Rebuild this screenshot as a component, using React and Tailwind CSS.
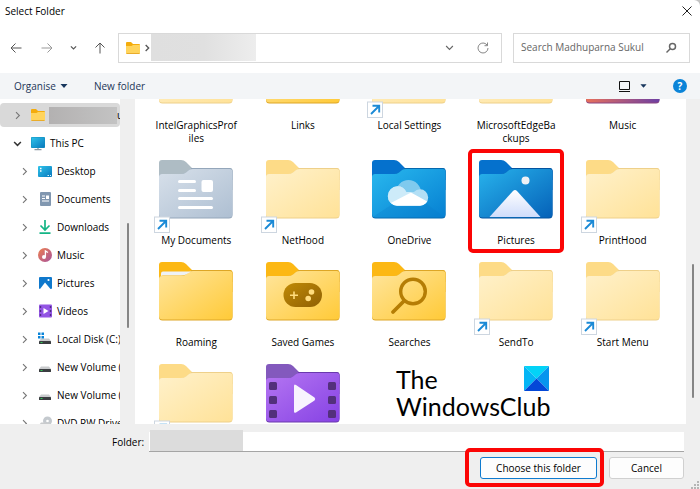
import React, { useState } from 'react';

// body + tab gradients for every folder colour
const PALETTES = {
  yellow: { tab: '#fcb814', from: '#ffe59c', to: '#ffca38', edge: '#dda626' },
  faded: { tab: '#fddb87', from: '#fff1cb', to: '#ffe298', edge: '#eed08a' },
  grey: { tab: '#aebcc4', from: '#d7e0ea', to: '#aebfd2', edge: '#94a6ba' },
  blue: { tab: '#0571cd', from: '#29b8ee', to: '#0680d2', edge: '#0568ae' },
  navy: { tab: '#0571cd', from: '#28b3ec', to: '#0561b8', edge: '#04539f' },
  purple: { tab: '#8359bd', from: '#b576f2', to: '#8642e4', edge: '#6a39ad' },
  music: { tab: '#e8705b', from: '#e8705b', to: '#6d3fa3', edge: '#8a4580' },
};

const FILES = [
  { name: 'IntelGraphicsProfiles', color: 'faded', lines: ['IntelGraphicsProf', 'iles'] },
  { name: 'Links', color: 'yellow' },
  { name: 'Local Settings', color: 'faded', shortcut: true },
  { name: 'MicrosoftEdgeBackups', color: 'faded', lines: ['MicrosoftEdgeBa', 'ckups'] },
  { name: 'Music', color: 'music' },
  { name: 'My Documents', color: 'grey', glyph: 'document', shortcut: true },
  { name: 'NetHood', color: 'faded', shortcut: true },
  { name: 'OneDrive', color: 'blue', glyph: 'cloud' },
  { name: 'Pictures', color: 'navy', glyph: 'picture', marked: true },
  { name: 'PrintHood', color: 'faded', shortcut: true },
  { name: 'Roaming', color: 'yellow', glyph: 'paper' },
  { name: 'Saved Games', color: 'yellow', glyph: 'game' },
  { name: 'Searches', color: 'yellow', glyph: 'search' },
  { name: 'SendTo', color: 'faded', shortcut: true },
  { name: 'Start Menu', color: 'faded', shortcut: true },
  { name: 'Templates', color: 'faded', shortcut: true },
  { name: 'Videos', color: 'purple', glyph: 'video' },
];

const PLACES = [
  { name: 'Desktop', icon: 'desktop' },
  { name: 'Documents', icon: 'documents' },
  { name: 'Downloads', icon: 'downloads' },
  { name: 'Music', icon: 'music' },
  { name: 'Pictures', icon: 'pictures' },
  { name: 'Videos', icon: 'videos' },
  { name: 'Local Disk (C:)', icon: 'system' },
  { name: 'New Volume (D:)', icon: 'drive' },
  { name: 'New Volume (E:)', icon: 'drive' },
  { name: 'DVD RW Drive (F:)', icon: 'dvd' },
];

function Glyph({ type }) {
  switch (type) {
    case 'document':
      return (
        <g fill="#fff">
          <rect x="24" y="20" width="18" height="3" rx="1.5" />
          <rect x="24" y="29" width="18" height="3" rx="1.5" />
          <rect x="24" y="37" width="35" height="3" rx="1.5" />
          <rect x="24" y="46" width="35" height="3" rx="1.5" />
          <rect x="47.5" y="20" width="11.5" height="12" rx="2" />
        </g>
      );
    case 'cloud':
      return (
        <g>
          <clipPath id="cloud">
            <circle cx="30.500" cy="36" r="9.700" />
            <circle cx="53" cy="37.500" r="8.200" />
            <rect x="30" y="32" width="23" height="13.700" />
          </clipPath>
          <path d="M5 57.500 L44 32 L78 57.500 Z" fill="#0679c8" opacity="0.25" />
          <circle cx="41.500" cy="32.500" r="12.500" fill="#7fcaee" />
          <g clipPath="url(#cloud)">
            <rect x="20" y="20" width="42" height="26" fill="#b3dff5" />
            <path d="M20 20 H36 L44 33 L20 46 Z" fill="#cdebf9" />
            <path d="M20 45 L44 32.500 L63 43 V46 H20 Z" fill="#fff" />
          </g>
        </g>
      );
    case 'picture':
      return (
        <g>
          <circle cx="51.500" cy="20.500" r="4" fill="#eef1f5" />
          <path d="M15.500 57 L39 31 Q41 29 43 31 L66.500 57 Z" fill="url(#peak)" />
        </g>
      );
    case 'paper':
      return <path d="M7 14 V11.500 Q7 9.500 9 9.500 H37 L32 12.500 Q30 13.500 27 13.500 H9 Q7 13.500 7 14 Z" fill="#eef2f7" />;
    case 'game':
      return (
        <g>
          <rect x="22.500" y="21" width="38.500" height="24" rx="12" fill="url(#pad)" />
          <path d="M33 29.500 V37 M29 33.200 H37" stroke="#ffdc7d" strokeWidth="1.600" fill="none" />
          <circle cx="50.500" cy="30" r="2.800" fill="#ffdc7d" />
          <circle cx="47.200" cy="36.500" r="2.800" fill="#ffdc7d" />
        </g>
      );
    case 'search':
      return (
        <g stroke="#b57d05" fill="none" strokeLinecap="round">
          <circle cx="46" cy="29.500" r="12.300" strokeWidth="3.400" />
          <path d="M37 39 L26 50" strokeWidth="3.800" />
        </g>
      );
    case 'video':
      return (
        <g>
          <g fill="#53307c">
            <rect x="8" y="18" width="8" height="8" rx="1.500" />
            <rect x="8" y="32" width="8" height="8" rx="1.500" />
            <rect x="8" y="46" width="8" height="8" rx="1.500" />
            <rect x="67" y="18" width="8" height="8" rx="1.500" />
            <rect x="67" y="32" width="8" height="8" rx="1.500" />
            <rect x="67" y="46" width="8" height="8" rx="1.500" />
          </g>
          <path d="M33 22 Q33 19.500 35 21 L53.500 33.500 Q55 35 53.500 36.500 L35 48.500 Q33 49.500 33 47.500 Z" fill="#f8f3fe" />
        </g>
      );
    default:
      return null;
  }
}

function FolderIcon({ color, glyph, shortcut }) {
  const p = PALETTES[color];
  return (
    <svg viewBox="0 0 84 74" className="block h-[74px] w-[84px]" aria-hidden="true">
      <defs>
        <linearGradient id={`body-${color}`} x1="0" y1="0" x2="1" y2={color === 'music' ? '0' : '1'}>
          <stop offset="0" stopColor={p.from} />
          <stop offset="1" stopColor={p.to} />
        </linearGradient>
        <linearGradient id="peak" x1="0" y1="0" x2="0" y2="1">
          <stop offset="0" stopColor="#fff" />
          <stop offset="1" stopColor="#cfdcfb" />
        </linearGradient>
        <linearGradient id="pad" x1="0" y1="0" x2="1" y2="1">
          <stop offset="0" stopColor="#c08a06" />
          <stop offset="1" stopColor="#8f6004" />
        </linearGradient>
      </defs>
      <path d="M5 18 V3 Q5 0 8 0 H27 Q30 0 32 2 L38 8 H75.500 Q78.500 8 78.500 11 V30 H5 Z" fill={p.tab} />
      <path d="M37 8 H75.500 Q78.500 8 78.500 11 V20 H37 Z" fill={p.edge} />
      <path d="M5 17 Q5 14 8 14 H27 Q30 14 32 12.500 L35 10 Q36.500 9 39 9 H75.500 Q78.500 9 78.500 12 V55 Q78.500 58.500 75 58.500 H8.500 Q5 58.500 5 55 Z" fill={p.edge} />
      <path d="M5 17 Q5 14 8 14 H27 Q30 14 32 12.500 L35 10 Q36.500 9 39 9 H75.500 Q78.500 9 78.500 12 V54 Q78.500 57.500 75 57.500 H8.500 Q5 57.500 5 54 Z" fill={`url(#body-${color})`} />
      <Glyph type={glyph} />
      {shortcut && (
        <g>
          <rect x="0.500" y="57" width="15" height="15.500" fill="#fff" stroke="#cdd6e0" />
          <path d="M4 69 L11.500 61.500 M5.500 60.700 H12.200 V67.500" fill="none" stroke="#1b8ad6" strokeWidth="1.900" />
        </g>
      )}
    </svg>
  );
}

function SmallFolder() {
  return (
    <svg viewBox="0 0 14 12" className="h-3 w-[14px] shrink-0" aria-hidden="true">
      <path d="M0 1 Q0 0 1 0 H5 L7 2 H13 Q14 2 14 3 V6 H0 Z" fill="#f4ac0c" />
      <path d="M0 4 H5.500 L7 3 H14 V11 Q14 12 13 12 H1 Q0 12 0 11 Z" fill="#ffd45c" />
      <path d="M0.500 11.500 H13.500" stroke="#e9ac2b" />
    </svg>
  );
}

function PlaceIcon({ type }) {
  const drive = (
    <g>
      <path d="M4 7.500 H12 L14 10 H2 Z" fill="#c9cbcd" />
      <rect x="2" y="10" width="12" height="3" rx="0.500" fill="#3a3d40" />
      <rect x="3.500" y="11" width="2" height="1" fill="#35c759" />
    </g>
  );
  return (
    <svg viewBox="0 0 16 16" className="h-4 w-4 shrink-0" aria-hidden="true">
      {type === 'pc' && (
        <g>
          <rect x="1" y="2" width="14" height="11" rx="1" fill="#118fbd" />
          <rect x="1.500" y="2.500" width="13" height="10" rx="0.500" fill="url(#screen)" />
          <path d="M8 13 V14.500 M4.500 14.700 H11.500" stroke="#8b98a2" strokeWidth="1.300" />
        </g>
      )}
      {type === 'desktop' && (
        <g>
          <rect x="1" y="3" width="14" height="11" rx="1" fill="url(#screen)" />
          <path d="M3 5.500 H4.500 M3 8 H4.500" stroke="#fff" strokeWidth="1.300" />
          <path d="M10.500 12.500 H12 M13 12.500 H14" stroke="#d5f3fc" />
        </g>
      )}
      {type === 'documents' && (
        <g>
          <rect x="3" y="1" width="11" height="14" rx="1" fill="#8197b0" />
          <path d="M5 5 H8 M5 7.500 H8 M5 10 H12" stroke="#fff" strokeWidth="1.200" />
          <rect x="9" y="4.500" width="3" height="3.500" fill="#fff" />
        </g>
      )}
      {type === 'downloads' && (
        <path d="M8 1 V11 M3.500 6.500 L8 11 L12.500 6.500 M2.500 14.200 H13.500" fill="none" stroke="#14b585" strokeWidth="1.700" />
      )}
      {type === 'music' && (
        <g>
          <circle cx="8" cy="8" r="7" fill="url(#disc)" />
          <circle cx="7" cy="10" r="2" fill="#fff" />
          <path d="M8.400 10 V4 L11 5.500" fill="none" stroke="#fff" strokeWidth="1.300" />
        </g>
      )}
      {type === 'pictures' && (
        <g>
          <rect x="2" y="2" width="13" height="12" rx="1" fill="#0f78cc" />
          <path d="M3 14 L8 7.500 L13.500 14 Z" fill="#fff" />
          <circle cx="11.500" cy="5" r="1.100" fill="#fff" />
        </g>
      )}
      {type === 'videos' && (
        <g>
          <rect x="2" y="1.500" width="13" height="13" rx="1" fill="#9355e4" />
          <path d="M3.500 3 V14 M13.500 3 V14" stroke="#4f2c80" strokeWidth="1.400" strokeDasharray="2 2" />
          <path d="M6.500 5 L11.500 8 L6.500 11 Z" fill="#fff" />
        </g>
      )}
      {type === 'system' && (
        <g>
          {drive}
          <path d="M1 1.500 H3.500 V4 H1 Z M4.500 1.500 H7 V4 H4.500 Z M1 5 H3.500 V7.500 H1 Z M4.500 5 H7 V7.500 H4.500 Z" fill="#0a84d8" />
        </g>
      )}
      {type === 'drive' && drive}
      {type === 'dvd' && (
        <g>
          <circle cx="10.500" cy="6" r="4.500" fill="#c4c9ce" />
          <circle cx="10.500" cy="6" r="1.300" fill="#fff" />
          {drive}
        </g>
      )}
      <defs>
        <linearGradient id="screen" x1="0" y1="0" x2="1" y2="1">
          <stop offset="0" stopColor="#2fc3ea" />
          <stop offset="1" stopColor="#0878bd" />
        </linearGradient>
        <linearGradient id="disc" x1="0" y1="0" x2="1" y2="1">
          <stop offset="0" stopColor="#ee7f4e" />
          <stop offset="1" stopColor="#a8539c" />
        </linearGradient>
      </defs>
    </svg>
  );
}

function Stroke({ d, className }) {
  return (
    <svg viewBox="0 0 12 12" className={className} fill="none" stroke="currentColor" aria-hidden="true">
      <path d={d} />
    </svg>
  );
}

const RIGHT = 'M4 1.500 L8.500 6 L4 10.500';
const DOWN = 'M1.500 4 L6 8.500 L10.500 4';

export default function App() {
  const [search, setSearch] = useState('');
  const [folder, setFolder] = useState('');

  return (
    <div className="h-screen bg-[#c4c4c4] font-['Open_Sans','Noto_Sans',sans-serif] text-[10px] leading-[13px] text-black">
      <div className="flex h-full flex-col overflow-hidden rounded-tr-md bg-white">
        <header className="flex h-[22px] shrink-0 items-center justify-between pl-[5px] pr-[7px]">
          <h1>Select Folder</h1>
          <button type="button" aria-label="Close">
            <Stroke d="M1.500 1.500 L10.500 10.500 M10.500 1.500 L1.500 10.500" className="h-3 w-3 text-[#222]" />
          </button>
        </header>

        {/* Navigation */}
        <nav className="flex h-[51px] shrink-0 items-center pl-[10px] pr-[10px]">
          <div className="flex w-[108px] items-center text-[#555]">
            <button type="button" aria-label="Back">
              <Stroke d="M11.500 6 H1 M5.500 1.500 L1 6 L5.500 10.500" className="h-3 w-3" />
            </button>
            <button type="button" aria-label="Forward" className="ml-[19px] text-[#999]">
              <Stroke d="M0.500 6 H11 M6.500 1.500 L11 6 L6.500 10.500" className="h-3 w-3" />
            </button>
            <button type="button" aria-label="Recent locations" className="ml-[17px]">
              <Stroke d={DOWN} className="h-[7px] w-[7px] stroke-2" />
            </button>
            <button type="button" aria-label="Up" className="ml-[17px]">
              <Stroke d="M6 11.500 V1 M1.500 5.500 L6 1 L10.500 5.500" className="h-3 w-3" />
            </button>
          </div>
          <div className="flex h-[30px] flex-1 items-center border border-[#d9d9d9] pl-[7px] pr-3">
            <SmallFolder />
            <Stroke d={RIGHT} className="ml-[3px] h-2 w-2 stroke-2 text-[#555]" />
            <div className="h-[27px] w-[105px] bg-linear-to-r from-[#dfdfdf] via-[#e0e0e0] to-[#ededed]" />
            <button type="button" aria-label="Previous locations" className="ml-auto text-[#666]">
              <Stroke d={DOWN} className="h-[9px] w-[9px] stroke-[1.5px]" />
            </button>
            <button type="button" aria-label="Refresh" className="ml-[23px] text-[#888]">
              <Stroke d="M11 6 A5 5 0 1 1 9 2 L10.500 3.500 M10.500 0.500 V3.700 H7.500" className="h-3 w-3" />
            </button>
          </div>
          <label className="ml-[11px] flex h-[30px] w-[177px] items-center border border-[#d9d9d9] pl-[7px] pr-3">
            <input
              type="text"
              aria-label="Search"
              placeholder="Search Madhuparna Sukul"
              value={search}
              onChange={(e) => setSearch(e.target.value)}
              className="min-w-0 flex-1 outline-none placeholder:text-[#666]"
            />
            <svg viewBox="0 0 12 12" className="h-3 w-3 text-[#666]" fill="none" stroke="currentColor" aria-hidden="true">
              <circle cx="7.500" cy="4.500" r="3" strokeWidth="1.500" />
              <path d="M5.500 6.500 L1.500 10.500" strokeWidth="1.500" />
            </svg>
          </label>
        </nav>

        {/* Command bar */}
        <div className="flex h-[26px] shrink-0 items-center bg-[#f3f5f7] pl-[14px] pr-[13px] text-[#1d3557]">
          <button type="button" className="flex items-center gap-1">
            Organise
            <svg viewBox="0 0 8 4" className="h-1 w-2" aria-hidden="true">
              <path d="M0.500 0 H7.500 L4 4 Z" fill="#17365d" />
            </svg>
          </button>
          <button type="button" className="ml-[26px]">New folder</button>
          <button type="button" aria-label="Change view" className="ml-auto flex items-center gap-[10px]">
            <svg viewBox="0 0 11 11" className="h-[11px] w-[11px]" aria-hidden="true">
              <path d="M1 0.500 H10.500 V8.500 H0.500 V0.500 Z M0 10.500 H11" fill="none" stroke="#111" />
            </svg>
            <svg viewBox="0 0 8 4" className="h-1 w-[7px]" aria-hidden="true">
              <path d="M0.500 0 H7.500 L4 4 Z" fill="#17365d" />
            </svg>
          </button>
          <button
            type="button"
            aria-label="Help"
            className="ml-[26px] flex h-[14px] w-[14px] items-center justify-center rounded-full bg-[#0b84d8] font-bold text-white"
          >
            ?
          </button>
        </div>

        {/* Tree and files */}
        <div className="flex min-h-0 flex-1 overflow-hidden">
          <aside className="w-[120px] shrink-0 overflow-hidden whitespace-nowrap pt-1">
            <div className="flex h-6 items-center rounded-sm bg-[#d9d9d9] pl-[13px]">
              <Stroke d={RIGHT} className="mr-[9px] h-[9px] w-[9px] shrink-0 stroke-[1.5px] text-[#777]" />
              <SmallFolder />
              <div className="ml-1 h-[17px] w-[68px] shrink-0 bg-linear-to-r from-[#b3b1b1] to-[#c3c3c3]" />
              u
            </div>
            <div className="mt-[2px] flex h-7 items-center pl-[13px]">
              <Stroke d={DOWN} className="mr-2 h-[9px] w-[9px] stroke-2 text-[#333]" />
              <PlaceIcon type="pc" />
              <span className="ml-1">This PC</span>
            </div>
            <ul>
              {PLACES.map((place) => (
                <li key={place.name} className="flex h-7 items-center pl-5">
                  <Stroke d={RIGHT} className="mr-2 h-[9px] w-[9px] shrink-0 stroke-[1.5px] text-[#777]" />
                  <PlaceIcon type={place.icon} />
                  <span className="ml-1">{place.name}</span>
                </li>
              ))}
            </ul>
          </aside>
          <div className="flex w-[15px] shrink-0 justify-center bg-[#efefef] pt-[124px]">
            <div className="h-[105px] w-[2px] rounded-full bg-[#858585]" />
          </div>

          <main className="relative min-w-0 flex-1 overflow-hidden">
            {/* scrolled part way through the first row */}
            <ul className="-mt-[54px] grid grid-cols-5 pl-2 pr-[10px] text-center">
              {FILES.map((file) => (
                <li key={file.name} className="relative flex flex-col items-center pb-[15px]">
                  <FolderIcon color={file.color} glyph={file.glyph} shortcut={file.shortcut} />
                  {(file.lines || [file.name]).map((line) => (
                    <span key={line}>{line}</span>
                  ))}
                  {file.marked && (
                    <div className="absolute -top-[11px] left-1/2 h-[104px] w-[96px] -translate-x-1/2 rounded-[5px] border-4 border-[#fb0505]" />
                  )}
                </li>
              ))}
            </ul>

            {/* Watermark */}
            <div className="absolute left-[261px] top-[267px] w-[153px] font-[Lato,sans-serif] text-[25px] leading-[27px] text-black">
              <div className="flex items-start justify-between">
                <span>The</span>
                <svg viewBox="0 0 25 25" className="h-[25px] w-[25px]" aria-hidden="true">
                  <path d="M0 0 H25 L12.500 12.500 Z" fill="#03d3f7" />
                  <path d="M0 0 L12.500 12.500 L0 25 Z" fill="#04b5f5" />
                  <path d="M25 0 V25 L12.500 12.500 Z" fill="#0795ee" />
                  <path d="M0 25 L12.500 12.500 L25 25 Z" fill="#0448d8" />
                </svg>
              </div>
              <div>WindowsClub</div>
            </div>
          </main>
          <div className="flex w-[14px] shrink-0 justify-center bg-[#efefef] pt-[165px]">
            <div className="h-[134px] w-[2px] rounded-full bg-[#858585]" />
          </div>
        </div>

        {/* Footer */}
        <footer className="relative h-[65px] shrink-0 bg-[#efefef] pl-[112px] pr-4 pt-2">
          <div className="flex items-center">
            <label htmlFor="folder" className="w-[37px]">Folder:</label>
            <div className="relative flex-1">
              <input
                id="folder"
                type="text"
                value={folder}
                onChange={(e) => setFolder(e.target.value)}
                className="block h-5 w-full border-b border-[#a5a5a5] bg-white px-1 outline-none"
              />
              <div className="absolute -top-[2px] left-px h-[21px] w-[93px] bg-[#dcdcdc]" />
            </div>
          </div>
          <div className="mt-[5px] flex justify-end gap-3">
            <div className="relative">
              <button type="submit" className="h-[22px] w-[117px] rounded-[3px] border border-[#0f7bcf] bg-[#fdfdfd]">
                Choose this folder
              </button>
              <div className="pointer-events-none absolute -left-[15px] -top-[9px] h-[39px] w-[139px] rounded-[5px] border-4 border-[#fb0505]" />
            </div>
            <button type="button" className="h-[22px] w-[75px] rounded-[3px] border border-[#d0d0d0] bg-[#fdfdfd]">
              Cancel
            </button>
          </div>
          {/* resize grip */}
          <svg viewBox="0 0 10 8" className="absolute bottom-0 right-0 h-2 w-[10px]" aria-hidden="true">
            <path d="M7 1 H9 M4 4 H6 M7 4 H9 M1 7 H3 M4 7 H6 M7 7 H9" stroke="#b5b5b5" strokeWidth="2" />
          </svg>
        </footer>
      </div>
    </div>
  );
}
